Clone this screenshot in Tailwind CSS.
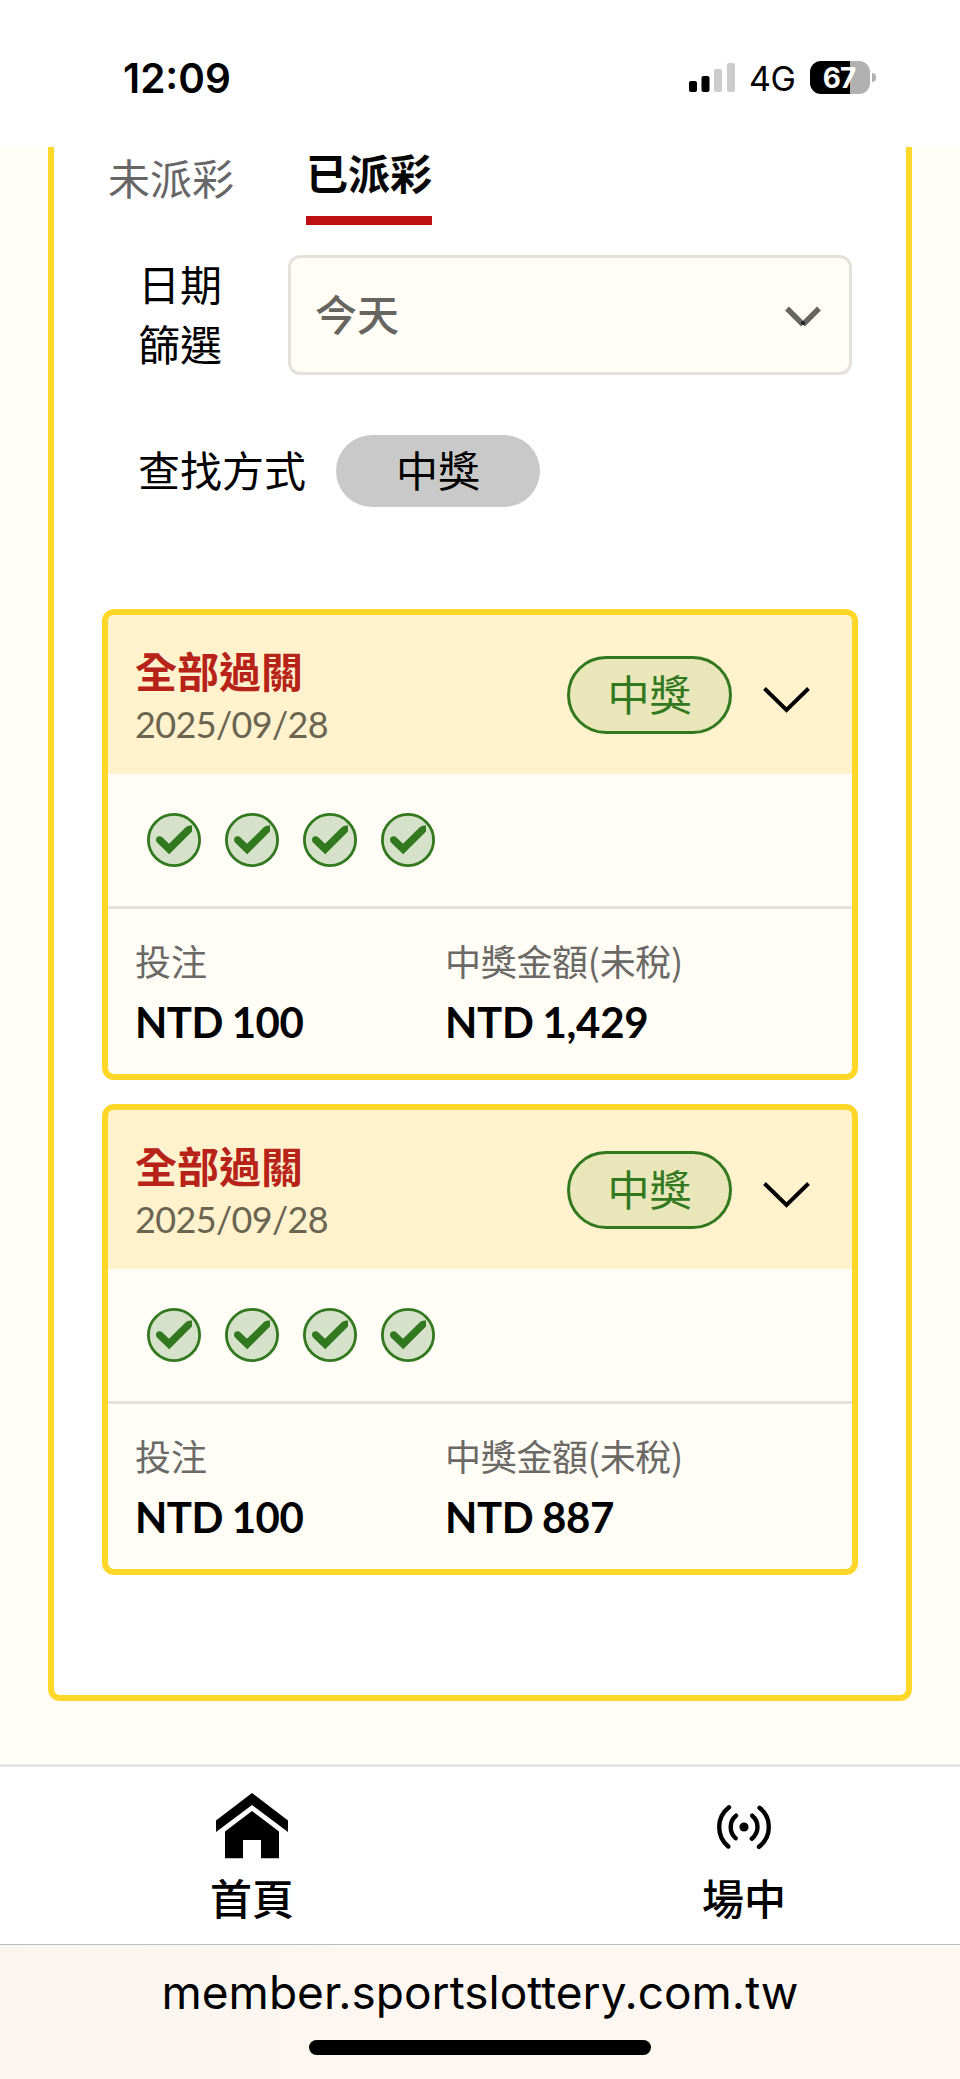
<!DOCTYPE html>
<html lang="zh-Hant">
<head>
<meta charset="utf-8">
<title>投注紀錄</title>
<script src="https://cdn.jsdelivr.net/npm/@tailwindcss/browser@4"></script>
</head>
<body class="w-[960px] h-[2079px] overflow-hidden flex flex-col bg-[#fffdf5] text-black font-['Noto_Sans_CJK_TC',sans-serif] text-[42px] leading-[60px]">

<header class="h-[147px] shrink-0 bg-white flex justify-between pl-[123px] pr-[84px] font-['Inter',sans-serif]">
  <div class="mt-[49px] text-[40.5px] leading-[60px] font-semibold">12:09</div>
  <div class="flex items-start pt-[61px]">
    <svg class="w-[46px] h-[31px] mr-[14px]" viewBox="0 0 46 31"><rect x="0" y="20" width="8" height="11" rx="2"/><rect x="12.5" y="15" width="8" height="16" rx="2"/><g fill="#ccc"><rect x="25" y="8" width="8" height="23" rx="2"/><rect x="38" y="2" width="8" height="29" rx="2"/></g></svg>
    <div class="w-[46px] mr-[15px] text-[34px] leading-[36px] tracking-[-0.5px] whitespace-nowrap">4G</div>
    <div class="w-[60px] h-[33px] rounded-[11px] overflow-hidden bg-[linear-gradient(90deg,#000_40px,#b1b1b1_40px)] text-white font-bold text-[28px] leading-[34px] tracking-[-1px] flex justify-center pr-[2px]">67</div>
    <div class="ml-[2px] mt-[12px] w-1 h-[9px] rounded-r-full bg-[#b1b1b1]"></div>
  </div>
</header>

<main class="h-[1617px] shrink-0 px-12">
  <section class="h-[1554px] bg-white border-x-6 border-b-6 border-[#ffd728] rounded-b-xl px-12">
    <nav class="flex items-start h-[78px] pl-[7px] gap-[71px] leading-[42px]">
      <div class="-ml-px mr-px pt-[9px] text-[#666]">未派彩</div>
      <div class="h-full pt-1 border-b-9 border-[#bc1013] font-bold text-[#070707]">已派彩</div>
    </nav>

    <div class="mt-[30px] flex pl-[36px]">
      <div class="w-[150px] -mt-[2px] flex flex-col"><span>日期</span><span>篩選</span></div>
      <div class="w-[564px] h-[120px] rounded-xl border-3 border-[#e5e2dc] bg-[#fffdf5] flex items-center justify-between pl-[24px] pr-[28px] font-medium text-[#666560]">
        <span class="-mt-[5px]">今天</span>
        <svg class="w-[36px] h-[22px] mt-1" viewBox="0 0 36 22" fill="none" stroke="#666560" stroke-width="5.4"><path d="M2 2.5 18 18.5M34 2.5 18 18.5"/><circle cx="18" cy="17" r="2" fill="#222" stroke="none"/></svg>
      </div>
    </div>

    <div class="mt-[60px] flex items-center pl-[36px]">
      <div class="w-[198px] -mt-1">查找方式</div>
      <div class="w-[204px] h-[72px] rounded-full bg-[#c9c9c9] flex justify-center leading-[67px]">中獎</div>
    </div>

    <div class="mt-[102px] flex flex-col gap-6">
      <article class="h-[471px] rounded-xl border-6 border-[#ffd728] bg-[#fffdf5] overflow-hidden">
        <div class="h-[159px] bg-[#fff2cc] flex items-start pl-[27px] pr-[42px]">
          <div class="pt-[25px] grow">
            <div class="font-bold text-[#b72318]">全部過關</div>
            <div class="mt-[3px] font-['Lato',sans-serif] text-[36px] leading-[42px] tracking-[-0.65px] text-[#6a6552]">2025/09/28</div>
          </div>
          <div class="mt-[41px] w-[165px] h-[78px] rounded-full border-3 border-[#32781e] bg-[#e9e7b9] text-[#32781e] leading-[67px] flex justify-center">中獎</div>
          <svg class="mt-[71px] ml-[31px] w-[47px] h-[28px]" viewBox="0 0 47 28" fill="none" stroke="#000" stroke-width="3.9"><path d="M1.5 2.5 23.5 24 45.5 2.5"/></svg>
        </div>
        <div class="h-[135px] border-b-3 border-[#e5e2dc] flex items-center gap-6 pl-[39px]">
          <svg class="size-[54px]" viewBox="0 0 54 54"><circle cx="27" cy="27" r="25.6" fill="#d6e1ca" stroke="#32781e" stroke-width="2.8"/><path d="M9 27Q9 23.2 12.5 23.2 14.2 23.2 15.5 24.4L22 30.8 38.5 14.5Q41 12 45 12.6V18.5L22.2 41.3 10.5 30Q9 28.5 9 27Z" fill="#32781e"/></svg>
          <svg class="size-[54px]" viewBox="0 0 54 54"><circle cx="27" cy="27" r="25.6" fill="#d6e1ca" stroke="#32781e" stroke-width="2.8"/><path d="M9 27Q9 23.2 12.5 23.2 14.2 23.2 15.5 24.4L22 30.8 38.5 14.5Q41 12 45 12.6V18.5L22.2 41.3 10.5 30Q9 28.5 9 27Z" fill="#32781e"/></svg>
          <svg class="size-[54px]" viewBox="0 0 54 54"><circle cx="27" cy="27" r="25.6" fill="#d6e1ca" stroke="#32781e" stroke-width="2.8"/><path d="M9 27Q9 23.2 12.5 23.2 14.2 23.2 15.5 24.4L22 30.8 38.5 14.5Q41 12 45 12.6V18.5L22.2 41.3 10.5 30Q9 28.5 9 27Z" fill="#32781e"/></svg>
          <svg class="size-[54px]" viewBox="0 0 54 54"><circle cx="27" cy="27" r="25.6" fill="#d6e1ca" stroke="#32781e" stroke-width="2.8"/><path d="M9 27Q9 23.2 12.5 23.2 14.2 23.2 15.5 24.4L22 30.8 38.5 14.5Q41 12 45 12.6V18.5L22.2 41.3 10.5 30Q9 28.5 9 27Z" fill="#32781e"/></svg>
        </div>
        <div class="flex pt-[21px] pl-[27px]">
          <div class="w-[310px]">
            <div class="text-[36px] text-[#6a6965]">投注</div>
            <div class="mt-[2px] font-['Lato',sans-serif] font-bold tracking-[-0.5px] [word-spacing:-1px]">NTD 100</div>
          </div>
          <div>
            <div class="text-[36px] tracking-[-0.3px] text-[#6a6965]">中獎金額(未稅)</div>
            <div class="mt-[2px] font-['Lato',sans-serif] font-bold tracking-[-0.3px] [word-spacing:-1px]">NTD 1,429</div>
          </div>
        </div>
      </article>

      <article class="h-[471px] rounded-xl border-6 border-[#ffd728] bg-[#fffdf5] overflow-hidden">
        <div class="h-[159px] bg-[#fff2cc] flex items-start pl-[27px] pr-[42px]">
          <div class="pt-[25px] grow">
            <div class="font-bold text-[#b72318]">全部過關</div>
            <div class="mt-[3px] font-['Lato',sans-serif] text-[36px] leading-[42px] tracking-[-0.65px] text-[#6a6552]">2025/09/28</div>
          </div>
          <div class="mt-[41px] w-[165px] h-[78px] rounded-full border-3 border-[#32781e] bg-[#e9e7b9] text-[#32781e] leading-[67px] flex justify-center">中獎</div>
          <svg class="mt-[71px] ml-[31px] w-[47px] h-[28px]" viewBox="0 0 47 28" fill="none" stroke="#000" stroke-width="3.9"><path d="M1.5 2.5 23.5 24 45.5 2.5"/></svg>
        </div>
        <div class="h-[135px] border-b-3 border-[#e5e2dc] flex items-center gap-6 pl-[39px]">
          <svg class="size-[54px]" viewBox="0 0 54 54"><circle cx="27" cy="27" r="25.6" fill="#d6e1ca" stroke="#32781e" stroke-width="2.8"/><path d="M9 27Q9 23.2 12.5 23.2 14.2 23.2 15.5 24.4L22 30.8 38.5 14.5Q41 12 45 12.6V18.5L22.2 41.3 10.5 30Q9 28.5 9 27Z" fill="#32781e"/></svg>
          <svg class="size-[54px]" viewBox="0 0 54 54"><circle cx="27" cy="27" r="25.6" fill="#d6e1ca" stroke="#32781e" stroke-width="2.8"/><path d="M9 27Q9 23.2 12.5 23.2 14.2 23.2 15.5 24.4L22 30.8 38.5 14.5Q41 12 45 12.6V18.5L22.2 41.3 10.5 30Q9 28.5 9 27Z" fill="#32781e"/></svg>
          <svg class="size-[54px]" viewBox="0 0 54 54"><circle cx="27" cy="27" r="25.6" fill="#d6e1ca" stroke="#32781e" stroke-width="2.8"/><path d="M9 27Q9 23.2 12.5 23.2 14.2 23.2 15.5 24.4L22 30.8 38.5 14.5Q41 12 45 12.6V18.5L22.2 41.3 10.5 30Q9 28.5 9 27Z" fill="#32781e"/></svg>
          <svg class="size-[54px]" viewBox="0 0 54 54"><circle cx="27" cy="27" r="25.6" fill="#d6e1ca" stroke="#32781e" stroke-width="2.8"/><path d="M9 27Q9 23.2 12.5 23.2 14.2 23.2 15.5 24.4L22 30.8 38.5 14.5Q41 12 45 12.6V18.5L22.2 41.3 10.5 30Q9 28.5 9 27Z" fill="#32781e"/></svg>
        </div>
        <div class="flex pt-[21px] pl-[27px]">
          <div class="w-[310px]">
            <div class="text-[36px] text-[#6a6965]">投注</div>
            <div class="mt-[2px] font-['Lato',sans-serif] font-bold tracking-[-0.5px] [word-spacing:-1px]">NTD 100</div>
          </div>
          <div>
            <div class="text-[36px] tracking-[-0.3px] text-[#6a6965]">中獎金額(未稅)</div>
            <div class="mt-[2px] font-['Lato',sans-serif] font-bold tracking-[-0.4px] [word-spacing:-1px]">NTD 887</div>
          </div>
        </div>
      </article>
    </div>
  </section>
</main>

<nav class="h-[180px] shrink-0 border-t-3 border-[#e6e6e6] bg-white flex justify-between px-[168px] font-medium">
  <a class="w-[168px] flex flex-col items-center">
    <svg class="mt-[26px] w-[72px] h-[66px]" viewBox="0 0 72 66"><path d="M36 0 72 27.5V39L36 12 0 39V27.5Z"/><path d="M36 18 63 38.5V65.3H45V47H27V65.3H9V38.5Z"/></svg>
    <span class="mt-[8px]">首頁</span>
  </a>
  <a class="w-[168px] flex flex-col items-center -mr-[36px]">
    <svg class="mt-[37px] w-[56px] h-[46px]" viewBox="0 0 56 46" fill="none" stroke="#000" stroke-width="4.4" stroke-linecap="round"><circle cx="28" cy="23" r="4.6" fill="#000" stroke="none"/><path d="M20 11.7Q14.7 16 14.7 23T19.6 34.2M36.2 11.7Q41.5 16 41.5 23T35.8 34.7M13 3.3Q3.2 11 3.2 23T12.3 42.5M43.5 3.8Q52.8 11 52.8 23T43 42.8"/></svg>
    <span class="mt-[17px]">場中</span>
  </a>
</nav>

<footer class="h-[135px] shrink-0 border-t border-[#bdbdbd] bg-linear-to-r from-[#faf6ef] to-[#fcf8f1] to-40% flex flex-col items-center font-['Inter',sans-serif]">
  <div class="mt-[17px] text-[46px] leading-[60px] h-[60px] whitespace-nowrap">member.sportslottery.com.tw</div>
  <div class="mt-[18px] w-[342px] h-[15px] rounded-full bg-black"></div>
</footer>
</body>
</html>
